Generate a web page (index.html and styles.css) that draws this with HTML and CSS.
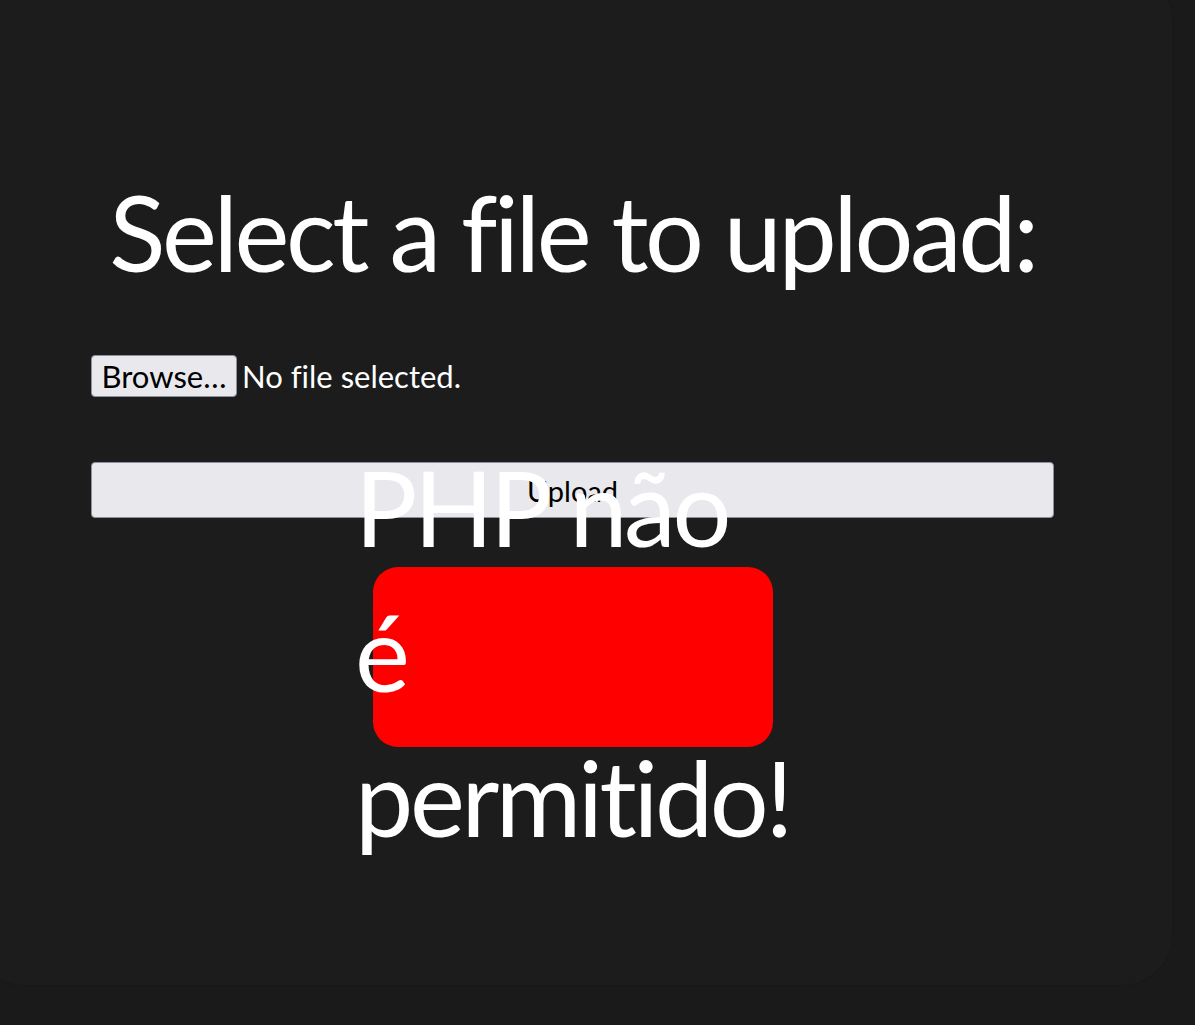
FILE: index.html
```html
<!DOCTYPE html>
<html lang="pt">
<head>
<meta charset="utf-8">
<title>Upload</title>
<link rel="stylesheet" href="styles.css">
</head>
<body>
<main class="card">
  <h1 class="title">Select a file to upload:</h1>
  <form class="form">
    <div class="file-row">
      <button type="button" class="browse">Browse…</button>
      <span class="file-name">No file selected.</span>
    </div>
    <button type="button" class="upload">Upload</button>
  </form>
  <div class="alert">
    <p class="alert-text">PHP não é permitido!</p>
  </div>
</main>
</body>
</html>
```
FILE: styles.css
```css
html, body {
  margin: 0;
  padding: 0;
}
body {
  background: #1a1a1a;
  overflow: hidden;
  height: 1025px;
  font-family: Lato, "Open Sans", sans-serif;
  color: #fff;
}
.card {
  box-sizing: border-box;
  width: 1199px;
  margin: -30px 0 0 -27px;
  padding: 199px 118px 238px;
  background: #1c1c1c;
  border-radius: 50px;
  box-shadow: 0 0 2px rgba(0, 0, 0, 0.12);
}
.title {
  margin: 0;
  font-size: 104px;
  font-weight: 400;
  line-height: 125px;
  letter-spacing: -3.4px;
  text-align: center;
  white-space: nowrap;
  font-variant-ligatures: none;
}
.form {
  margin: 61px 0 0;
  display: flex;
  flex-direction: column;
}
.file-row {
  display: flex;
  align-items: center;
  gap: 5px;
  height: 42px;
}
.browse {
  box-sizing: border-box;
  width: 146px;
  height: 42px;
  padding: 0;
  background: #e9e9ed;
  border: 1px solid #8f8f9d;
  border-radius: 4px;
  color: #000;
  font-family: inherit;
  font-size: 31px;
}
.file-name {
  font-size: 31px;
  color: #fff;
  font-variant-ligatures: none;
}
.upload {
  box-sizing: border-box;
  margin-top: 65px;
  width: 963px;
  height: 56px;
  padding: 0;
  background: #e9e9ed;
  border: 1px solid #8f8f9d;
  border-radius: 4px;
  color: #000;
  font-family: inherit;
  font-size: 29px;
}
.alert {
  margin: 49px auto 0;
  width: 400px;
  height: 180px;
  background: #ff0000;
  border-radius: 25px;
  display: flex;
  align-items: center;
  justify-content: center;
}
.alert-text {
  flex: 0 0 430px;
  margin: 0 0 12px;
  font-size: 104px;
  line-height: 145px;
  letter-spacing: -3.4px;
  color: #fff;
}
```
